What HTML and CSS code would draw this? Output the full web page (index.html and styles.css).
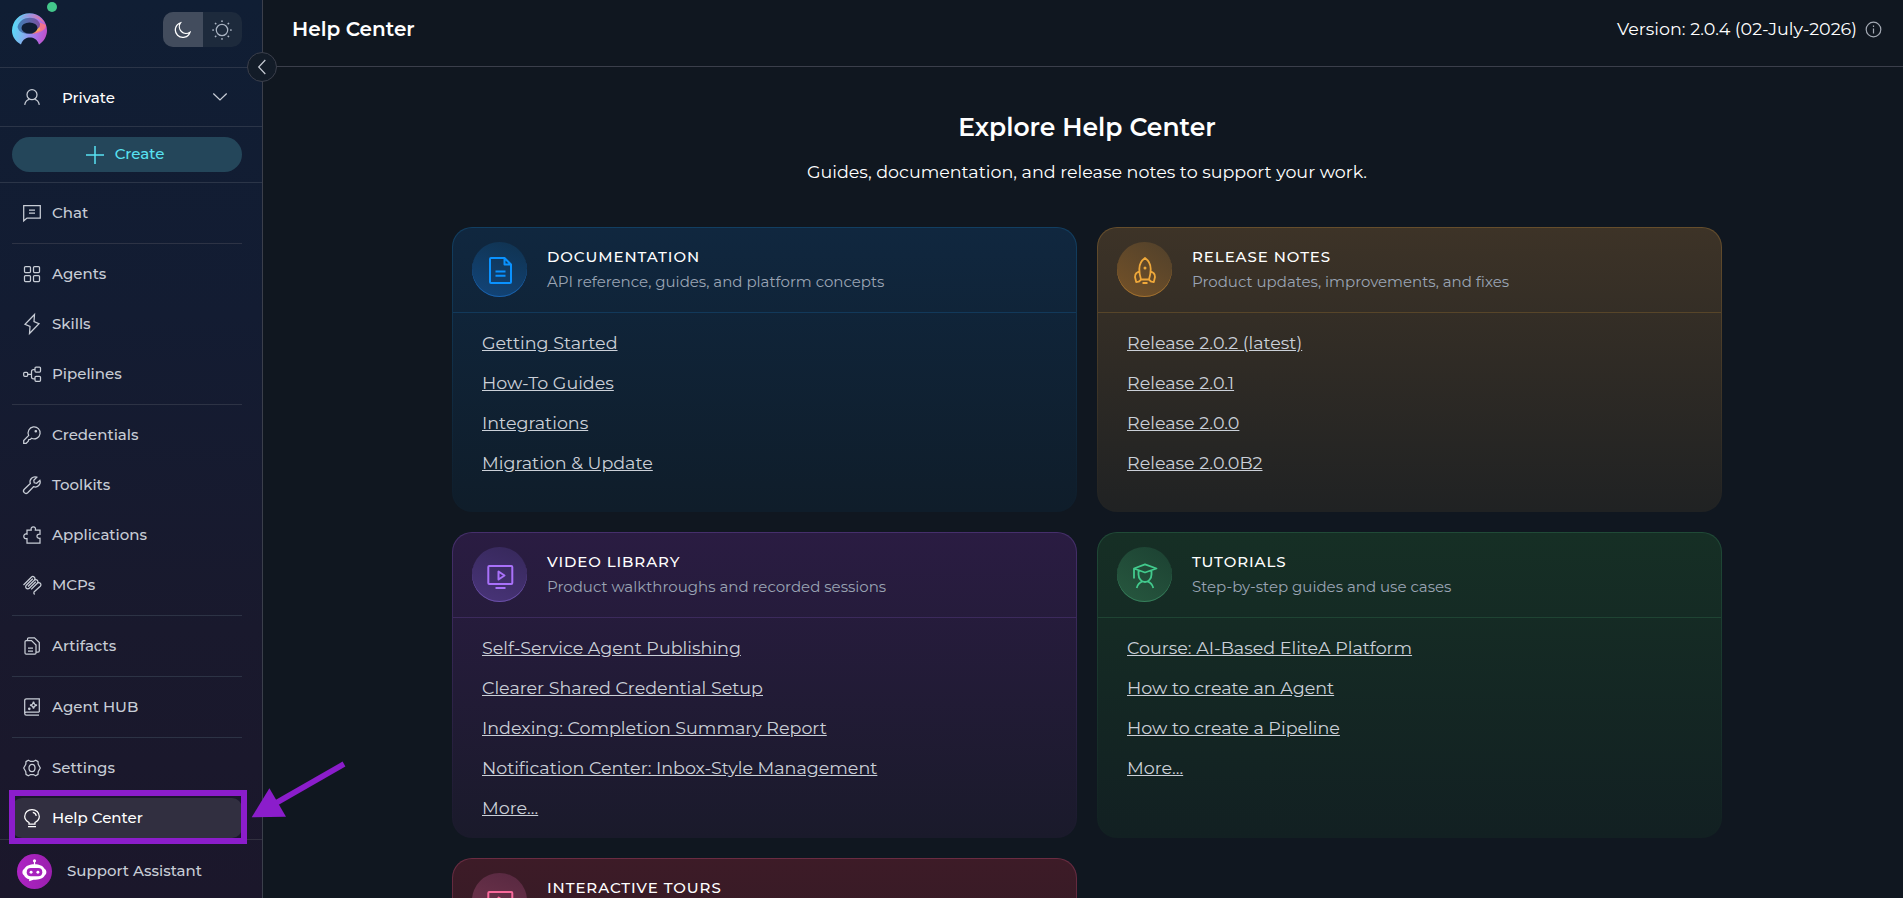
FILE: index.html
```html
<!DOCTYPE html>
<html lang="en">
<head>
<meta charset="utf-8">
<title>Help Center</title>
<link rel="stylesheet" href="styles.css">
</head>
<body>
<div class="app">
  <aside class="sidebar">
    <div class="brand">
      <div class="logo">
        <svg width="36" height="34" viewBox="0 0 36 34">
          <defs>
            <linearGradient id="ring" x1="0" y1=".4" x2="1" y2=".6"><stop offset="0" stop-color="#56dcf7"/><stop offset=".35" stop-color="#7fb4ee"/><stop offset=".68" stop-color="#a878ec"/><stop offset="1" stop-color="#c04fc8"/></linearGradient>
            <linearGradient id="top" x1="0" y1="0" x2="1" y2="0"><stop offset="0" stop-color="#6cc3ea"/><stop offset=".55" stop-color="#a98cd8"/><stop offset="1" stop-color="#f0708f"/></linearGradient>
            <linearGradient id="shade" x1="0" y1="0" x2="1" y2="0"><stop offset="0" stop-color="#3f7fb5"/><stop offset="1" stop-color="#7c4f9f"/></linearGradient>
          </defs>
          <path d="M9 31.500C2.500 28 0 22.500 0 17.500A17.500 17.200 0 0 1 35 17.500C35 23 32 28.500 27 31.500C25 26 21.500 24.500 18 24.500S11 26 9 31.500Z" fill="url(#ring)"/>
          <path d="M4 10.500C7 4 12 1 18 1S29.500 4 32.500 10.500C29 6.500 24 4.500 18 4.500S7.500 6 4 10.500Z" fill="url(#top)"/>
          <path d="M5.500 14C7 8 12 4.800 18 4.800S28 8 28.500 14C27 19.500 23 21 18 21S7 20 5.500 14Z" fill="url(#shade)"/>
          <path d="M28 9.500L34 12C34 17 28 20 20 21C25 18.500 28.500 15 28 9.500Z" fill="#f2738d"/>
          <path d="M27.500 14L28.500 17L20 21Z" fill="#f8a65b"/>
          <ellipse cx="17.500" cy="15" rx="8" ry="5.500" fill="#101d33"/>
        </svg>
        <span class="status"></span>
      </div>
      <div class="theme">
        <span class="theme-opt active"><svg class="ic" width="18" height="18" viewBox="0 0 18 18"><path d="M6.500 1.800A7.500 7.500 0 1 0 16 11.200A6.800 6.800 0 0 1 6.500 1.800Z"/></svg></span>
        <span class="theme-opt"><svg class="ic" width="20" height="20" viewBox="0 0 20 20"><circle cx="10" cy="10" r="5.700"/><path stroke-linecap="round" stroke-width="1.700" d="M10 1v.2M10 18.800v.2M1 10h.2M18.800 10h.2M3.500 3.500l.2.2M16.300 16.300l.2.2M3.500 16.500l.2-.2M16.300 3.700l.2-.2"/></svg></span>
      </div>
    </div>
    <div class="project">
      <svg class="ic" width="18" height="18" viewBox="0 0 18 18"><circle cx="9" cy="6.700" r="5"/><path d="M1.700 16.800C2.300 13.500 4 11.800 6.300 11.300M16.300 16.800C15.700 13.500 14 11.800 11.700 11.300"/></svg>
      <span class="project-name">Private</span>
      <svg class="ic" width="16" height="10" viewBox="0 0 16 10"><path d="M1.300 1.500L8 8L14.700 1.500"/></svg>
    </div>
    <div class="create-row">
      <div class="create"><svg class="ic plus" width="18" height="18" viewBox="0 0 18 18"><path d="M9 0v18M0 9h18"/></svg><span>Create</span></div>
    </div>
    <nav class="nav">
      <div class="item"><svg class="ic" viewBox="0 0 18 18"><path d="M.7 1.500H17.300V14H4L.7 16.800ZM6 6h6M6 9h6"/></svg><span>Chat</span></div>
      <hr>
      <div class="item"><svg class="ic" viewBox="0 0 18 18"><rect x="1.500" y="1.500" width="6" height="6" rx="1"/><rect x="10.500" y="1.500" width="6" height="6" rx="1"/><rect x="1.500" y="10.500" width="6" height="6" rx="1"/><rect x="10.500" y="10.500" width="6" height="6" rx="1"/></svg><span>Agents</span></div>
      <div class="item"><svg class="ic" viewBox="0 0 18 18"><path d="M11.500 -.5L2 9.300L7 11.500L6.500 18.500L16 8.700L11 6.500Z"/></svg><span>Skills</span></div>
      <div class="item"><svg class="ic" viewBox="0 0 18 18"><rect x=".7" y="7.300" width="4" height="4" rx="1"/><rect x="12" y="2" width="5.500" height="5" rx="1"/><rect x="12" y="11.300" width="5.500" height="5" rx="1"/><path d="M4.700 9.300h3.800M12 4.500H10.500Q8.500 4.500 8.500 6.500V12Q8.500 13.800 10.500 13.800H12"/></svg><span>Pipelines</span></div>
      <hr>
      <div class="item"><svg class="ic" viewBox="0 0 18 18"><path d="M5.700 9.400A6 6 0 1 1 8.600 12.300L7.300 13.400L5.600 13.700L5.300 15.300L3.200 17.300H.7V14.600L5.700 9.400Z"/><circle cx="12.800" cy="5.200" r=".7" fill="currentColor"/></svg><span>Credentials</span></div>
      <div class="item"><svg class="ic" viewBox="0 0 18 18"><path d="M13.800 1.200A5 5 0 0 0 7.300 7.500L1.300 13.200A2.300 2.300 0 0 0 4.700 16.700L10.500 10.700A5 5 0 0 0 16.900 4.300L13.700 7.300L11.200 6.800L10.800 4.300Z"/></svg><span>Toolkits</span></div>
      <div class="item"><svg class="ic" viewBox="0 0 18 18"><path d="M4 4H8.200C7.700 1.800 8.800.8 10.300.8S12.900 1.800 12.400 4H17V8.200C14.500 8 14 9 14 10.300S14.800 12.500 17 12.300V17H4V12.500C1.800 13 .8 11.900.8 10.300S1.800 7.600 4 8.100Z"/></svg><span>Applications</span></div>
      <div class="item"><svg class="ic" viewBox="0 0 18 18"><path d="M.5 9L8.300 1.200A2.100 2.100 0 0 1 11.300 4.200L5 10.500M5.200 10.400L11.300 4.300A2.100 2.100 0 0 1 14.300 7.300L8.200 13.400M14.300 7.300A2.100 2.100 0 0 1 17.300 10.300L11 16Q10.300 17 11.600 18.500M9.800 2.800L3.300 9.300A2.100 2.100 0 0 0 6.300 12.300L12.800 5.800"/></svg><span>MCPs</span></div>
      <hr>
      <div class="item"><svg class="ic" viewBox="0 0 18 18"><path d="M2 4.700Q2 3.500 3.200 3.500H8.500L13 8V16Q13 17.200 11.800 17.200H3.200Q2 17.200 2 16ZM4.500 3.300V2Q4.500.8 5.700.8H11.500L16.300 5.500V13.700Q16.300 15 15 15H13.200M5 11h5M5 14h5"/></svg><span>Artifacts</span></div>
      <hr>
      <div class="item"><svg class="ic" viewBox="0 0 18 18"><path d="M16.300 14V.8H3.500Q1.700.8 1.700 2.600V15.500M16.300 14H3.300Q1.700 14 1.700 15.600T3.300 17.200H16M10.500 3.500Q10.800 6.700 14 7.200Q10.800 7.700 10.500 10.800Q10.200 7.700 7 7.200Q10.200 6.700 10.500 3.500Z"/><circle cx="6.300" cy="10.800" r=".7" fill="currentColor"/></svg><span>Agent HUB</span></div>
      <hr>
      <div class="item"><svg class="ic" viewBox="0 0 18 18"><path d="M5.300 1.200L7.300 2.300H10.700L12.700 1.200L15 2.600L15.200 5.200L17.300 9L15.200 12.800L15 15.400L12.700 16.800L10.700 15.700H7.300L5.300 16.800L3 15.400L2.800 12.800L.7 9L2.800 5.200L3 2.600Z" stroke-linejoin="round"/><ellipse cx="9" cy="9" rx="3" ry="3.600"/></svg><span>Settings</span></div>
      <div class="item selected"><svg class="ic" viewBox="0 0 18 18"><path d="M6 15.200V13.500C3.300 12 1.700 10 1.700 7.500A7.300 7 0 0 1 16.300 7.500C16.300 10 14.700 12 12 13.500V15.200ZM5 17.600h8M9.800 3.300Q12.700 3.800 13.300 6.800"/></svg><span>Help Center</span></div>
    </nav>
    <div class="support">
      <span class="bot"><svg width="35" height="35" viewBox="0 0 36 36"><path d="M18 6.500V12" stroke="#fff" stroke-width="1.300"/><circle cx="18" cy="7" r="1.600" fill="#fff"/><path d="M18 10.500C23 10.500 27 12 28.500 15.500C30.800 16.500 30.800 21 28.500 22C27 25 22.500 26.500 17 26.500L12.500 28V26C10 25 8 24 7.300 22C5 21 5 16.500 7.300 15.500C9 12 13 10.500 18 10.500Z" fill="#fff"/><rect x="10" y="14.500" width="16" height="8.500" rx="4.200" fill="#a722bd"/><circle cx="14.500" cy="18.700" r="1.500" fill="#fff"/><circle cx="21.500" cy="18.700" r="1.500" fill="#fff"/></svg></span>
      <span class="support-name">Support Assistant</span>
    </div>
    <span class="collapse"><svg class="ic" width="10" height="16" viewBox="0 0 10 16"><path d="M8.300 1L1.700 8L8.300 15"/></svg></span>
  </aside>

  <main class="main">
    <header class="topbar">
      <h2>Help Center</h2>
      <div class="version"><span>Version: 2.0.4 (02-July-2026)</span><svg width="17" height="17" viewBox="0 0 17 17"><g fill="none" stroke="#a3a9b3" stroke-width="1.200"><circle cx="8.500" cy="8.500" r="7.300"/><path d="M8.500 7.500v5M8.500 4.500v1.400"/></g></svg></div>
    </header>
    <section class="content">
      <h1>Explore Help Center</h1>
      <p class="lead">Guides, documentation, and release notes to support your work.</p>
      <div class="cards">
        <article class="card blue">
          <div class="head">
            <span class="badge"><svg class="big" viewBox="0 0 30 30"><path d="M19.500 3H6Q5 3 5 4V27Q5 28 6 28H25Q26 28 26 27V9.500ZM19.500 3V9.500H26M10.500 16.500H20.500M10.500 20.700H20.500"/></svg></span>
            <div><h3>DOCUMENTATION</h3><p>API reference, guides, and platform concepts</p></div>
          </div>
          <ul><li><a>Getting Started</a></li><li><a>How-To Guides</a></li><li><a>Integrations</a></li><li><a>Migration &amp; Update</a></li></ul>
        </article>
        <article class="card amber">
          <div class="head">
            <span class="badge"><svg class="big thin" viewBox="0 0 30 30"><path d="M15 3C11.500 5.500 9.300 10 9.300 14C9.300 18 10 21.500 11 24.500H19C20 21.500 20.700 18 20.700 14C20.700 10 18.500 5.500 15 3ZM9.400 16.300L6.500 18Q4.800 19.500 5 22L6.200 27L8.700 26.700L11.200 24.500M20.600 16.300L23.500 18Q25.200 19.500 25 22L23.800 27L21.300 26.700L18.800 24.500M12.500 28H17.500"/><circle cx="15" cy="13" r="1.500" fill="currentColor" stroke="none"/></svg></span>
            <div><h3>RELEASE NOTES</h3><p>Product updates, improvements, and fixes</p></div>
          </div>
          <ul><li><a>Release 2.0.2 (latest)</a></li><li><a>Release 2.0.1</a></li><li><a>Release 2.0.0</a></li><li><a>Release 2.0.0B2</a></li></ul>
        </article>
        <article class="card violet">
          <div class="head">
            <span class="badge"><svg class="big" viewBox="0 0 30 30"><rect x="3.300" y="6" width="24" height="18" rx="1"/><path d="M13.500 11.500V19.500L19.500 15.500ZM10.500 28H20.500"/></svg></span>
            <div><h3>VIDEO LIBRARY</h3><p>Product walkthroughs and recorded sessions</p></div>
          </div>
          <ul><li><a>Self-Service Agent Publishing</a></li><li><a>Clearer Shared Credential Setup</a></li><li><a>Indexing: Completion Summary Report</a></li><li><a>Notification Center: Inbox-Style Management</a></li><li><a>More...</a></li></ul>
        </article>
        <article class="card green">
          <div class="head">
            <span class="badge"><svg class="big thin" viewBox="0 0 30 30"><path d="M4 8.500L15 4.300L26.500 8.500L15 12.500ZM4 8.500V18.500M8.500 10.500V14.500C8.500 18.500 11.500 22 15 22S21.500 18.500 21.500 14.500V10.500M6.700 28C7.500 25 9.500 22.500 12.300 21.500M23.300 28C22.500 25 20.500 22.500 17.700 21.500"/></svg></span>
            <div><h3>TUTORIALS</h3><p>Step-by-step guides and use cases</p></div>
          </div>
          <ul><li><a>Course: AI-Based EliteA Platform</a></li><li><a>How to create an Agent</a></li><li><a>How to create a Pipeline</a></li><li><a>More...</a></li></ul>
        </article>
        <article class="card rose">
          <div class="head">
            <span class="badge"><svg class="big" viewBox="0 0 30 30"><rect x="3.300" y="6" width="24" height="18" rx="1"/><path d="M13.500 11.500V19.500L19.500 15.500ZM10.500 28H20.500"/></svg></span>
            <div><h3>INTERACTIVE TOURS</h3></div>
          </div>
        </article>
      </div>
    </section>
  </main>

  <div class="highlight"></div>
  <svg class="arrow" width="100" height="74" viewBox="0 0 100 74"><path d="M94 9L26 48" stroke="#8b1dcb" stroke-width="5.600"/><path d="M1.700 62.300L19.400 33.300L36 61.700Z" fill="#8b1dcb"/></svg>
</div>
</body>
</html>
```
FILE: styles.css
```css
* { box-sizing: border-box; }
body { margin: 0; background: #101720; color: #fff; font-family: Montserrat, Inter, sans-serif; overflow: hidden; }
h1, h2, h3, p, ul { margin: 0; padding: 0; }
h1, h2 { font-weight: 600; }
.app { position: relative; display: flex; height: 898px; overflow: hidden; }
.ic { fill: none; stroke: currentColor; stroke-width: 1.25; flex: none; }

/* sidebar */
.sidebar { position: relative; width: 263px; flex: none; display: flex; flex-direction: column; border-right: 1px solid #3b3f4b; background: linear-gradient(180deg, #101e34 0%, #131c32 35%, #19192d 70%, #1b172b 100%); color: #c8cdd6; font-size: 15px; font-weight: 500; }
.brand { height: 68px; display: flex; justify-content: space-between; padding: 12px 20px 0 12px; border-bottom: 1px solid #2b3548; }
.logo { position: relative; height: 34px; margin-top: 1px; }
.logo svg { display: block; }
.status { position: absolute; left: 35px; top: -11px; width: 10px; height: 10px; border-radius: 50%; background: #43c78b; }
.theme { display: flex; width: 79px; height: 35px; border-radius: 10px; overflow: hidden; background: #1d2a3c; }
.theme-opt { flex: 1; display: flex; align-items: center; justify-content: center; color: #a9b3c2; }
.theme-opt.active { background: #424c5d; color: #fff; }
.project { height: 59px; display: flex; align-items: center; padding: 0 34px 0 23px; border-bottom: 1px solid #2b3548; }
.project-name { flex: 1; margin-left: 21px; color: #fff; }
.create-row { height: 56px; padding: 10px 20px 0 12px; border-bottom: 1px solid #2b3548; }
.create { height: 35px; display: flex; align-items: center; justify-content: center; gap: 11px; padding-right: 4px; border-radius: 18px; background: #24465a; color: #58e2f2; }
.create span, .item span, .support-name { margin-top: -2px; }
.plus { stroke-width: 1.5; }
.nav { flex: 1; display: flex; flex-direction: column; gap: 10px; padding: 10px 20px 0 12px; }
.nav hr { width: 100%; height: 1px; margin: 0; border: 0; background: #2d3345; }
.item { height: 40px; display: flex; align-items: center; gap: 11px; padding-left: 11px; border-radius: 10px; }
.item svg { width: 18px; height: 18px; overflow: visible; }
.item.selected { background: #312f40; color: #fff; }
.support { height: 59px; display: flex; align-items: center; gap: 15px; padding: 5px 0 0 17px; border-top: 1px solid #31303f; }
.bot { width: 35px; height: 35px; border-radius: 50%; background: linear-gradient(90deg, #ae24c4, #9a1fae); }
.bot svg { display: block; }
.collapse { position: absolute; left: 247px; top: 52px; width: 30px; height: 30px; display: flex; align-items: center; justify-content: center; border: 1px solid #3b3f4b; border-radius: 50%; background: #131c28; color: #c4c9d2; }

/* main column */
.main { flex: 1; min-width: 0; }
.topbar { height: 67px; display: flex; align-items: center; justify-content: space-between; padding: 0 21px 8px 29px; border-bottom: 1px solid #3b3f4b; }
.topbar h2 { font-size: 20px; }
.version { display: flex; align-items: center; gap: 8px; font-size: 17.5px; }
.version span { margin-top: -2px; }
.content { padding: 45px 181px 0 189px; }
h1 { text-align: center; font-size: 25px; line-height: 30px; }
.lead { margin-top: 18px; text-align: center; font-size: 17.5px; line-height: 24px; }
.cards { display: grid; grid-template-columns: 625px 625px; gap: 20px; margin-top: 43px; }
.card { min-height: 285px; padding-bottom: 9px; border: 1px solid transparent; border-radius: 20px; background: linear-gradient(var(--top), var(--bottom)) padding-box, linear-gradient(var(--edge), var(--bottom)) border-box; }
.head { height: 85px; display: flex; gap: 20px; padding: 14px 19px 0; border-bottom: 1px solid var(--line); }
.badge { width: 55px; height: 55px; display: flex; align-items: center; justify-content: center; border-radius: 50%; }
.big { width: 30px; height: 30px; fill: none; stroke: currentColor; stroke-width: 2; stroke-linejoin: round; }
.thin { stroke-width: 1.8; }
.head h3 { margin-top: 3px; font-size: 15px; font-weight: 500; line-height: 24px; letter-spacing: .92px; }
.head p { font-size: 15px; line-height: 25px; color: #9aa4b4; }
.card ul { padding: 10px 29px 0; list-style: none; }
.card li { height: 40px; line-height: 40px; font-size: 17.5px; color: #cbd0d8; }
.card a { text-decoration: underline; text-underline-offset: 1px; }

.blue { --top: #10273f; --bottom: #0f1d2a; --edge: #123f62; --line: #12395a; }
.blue .badge { background: linear-gradient(200deg, #10324f, #12457a); box-shadow: inset 0 -1px 0 #1a62ad; color: #0a92ff; }
.amber { --top: #3d3327; --bottom: #202223; --edge: #664e2c; --line: #574529; }
.amber .badge { background: linear-gradient(215deg, #50402b, #755228); box-shadow: inset 0 -1px 0 #a1702f; color: #efa83a; }
.violet { --top: #2a1c42; --bottom: #1a1a2b; --edge: #462f6c; --line: #3c2a5c; }
.violet .badge { background: linear-gradient(200deg, #36285a, #493479); box-shadow: inset 0 -1px 0 #6b50a8; color: #a971fa; }
.green { --top: #162f25; --bottom: #122022; --edge: #204a37; --line: #1f4433; }
.green .badge { background: linear-gradient(215deg, #1c4132, #27583f); box-shadow: inset 0 -1px 0 #367e5b; color: #42ca8d; }
.rose { --top: #3d1b27; --bottom: #201a22; --edge: #6b2c42; --line: #5a2738; }
.rose .badge { background: linear-gradient(200deg, #572840, #74374f); color: #f96a9c; }

/* callout over the sidebar */
.highlight { position: absolute; left: 9px; top: 790px; width: 238px; height: 54px; border: 6px solid #8b1dcb; }
.arrow { position: absolute; left: 250px; top: 755px; }
```
